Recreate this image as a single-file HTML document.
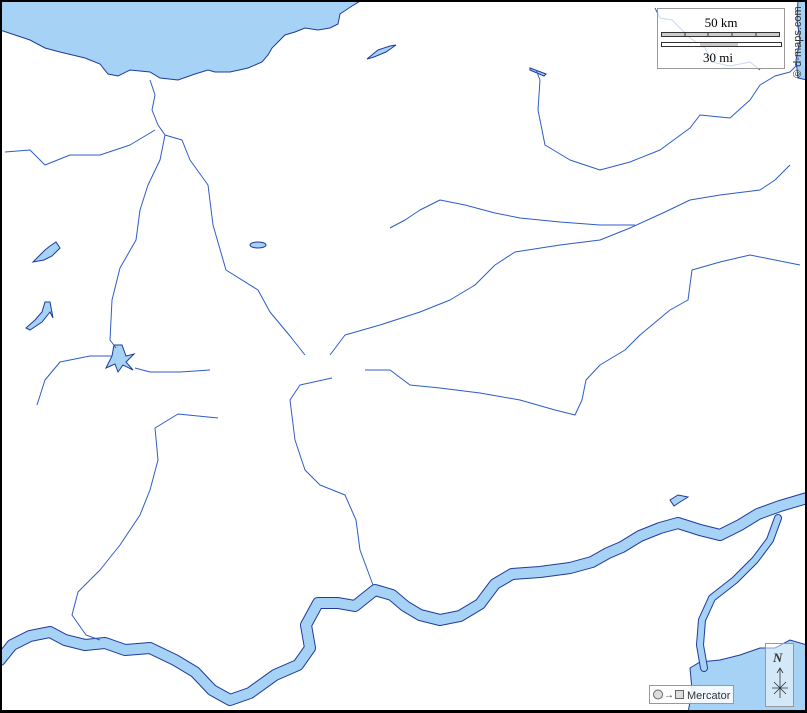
<!DOCTYPE html>
<html><head><meta charset="utf-8"><style>
html,body{margin:0;padding:0;background:#fff}
svg{display:block}
</style></head><body>
<svg width="807" height="713" viewBox="0 0 807 713" xmlns="http://www.w3.org/2000/svg">
<rect width="807" height="713" fill="#fff"/>
<g fill="#a6d3f5" stroke="#1e3a9a" stroke-width="1">
<path d="M0,0 L362,0 L352,6 L340,14 L338,24 L330,28 L318,30 L305,28 L295,32 L285,35 L278,42 L272,48 L268,55 L262,62 L248,68 L230,72 L215,72 L208,70 L195,74 L178,80 L160,78 L150,72 L130,70 L118,76 L108,74 L100,64 L85,58 L60,52 L45,48 L30,40 L15,35 L0,30 Z"/>
<path d="M807,0 L807,80 L798,78 L796,60 L800,40 L797,20 L798,0 Z"/>
<path d="M690,668 L700,662 L720,660 L740,655 L760,648 L775,648 L790,640 L807,645 L807,713 L688,713 L692,690 Z"/>
<ellipse cx="258" cy="245" rx="8" ry="3"/>
<path d="M33,262 L40,255 L45,250 L50,246 L56,242 L60,248 L52,256 L44,260 Z"/>
<path d="M26,328 L35,320 L42,312 L45,302 L50,302 L53,318 L50,312 L42,322 L30,330 Z"/>
<path d="M114,345 L122,345 L126,356 L134,354 L126,362 L133,370 L123,365 L118,372 L115,364 L106,368 L112,356 Z"/>
<path d="M670,500 L678,495 L688,497 L680,502 L674,506 Z"/>
<path d="M378,50 L390,46 L396,45 L386,52 L374,57 L367,59 Z"/>
<path d="M530,68 L546,74 L544,76 L530,70 Z"/>
</g>
<g fill="none" stroke-linecap="round" stroke-linejoin="round">
<path d="M0,660 L12,645 L30,636 L50,632 L65,640 L85,645 L105,643 L125,650 L150,648 L175,660 L195,672 L212,690 L230,700 L250,693 L275,675 L298,665 L310,648 L306,625 L318,603 L338,603 L355,606 L375,590 L392,595 L405,606 L420,615 L440,620 L460,616 L480,604 L495,584 L512,574 L540,572 L570,568 L592,562 L608,553 L622,547 L640,536 L660,528 L678,523 L700,530 L720,535 L740,525 L758,514 L780,506 L807,498" stroke="#1e3a9a" stroke-width="12"/>
<path d="M0,660 L12,645 L30,636 L50,632 L65,640 L85,645 L105,643 L125,650 L150,648 L175,660 L195,672 L212,690 L230,700 L250,693 L275,675 L298,665 L310,648 L306,625 L318,603 L338,603 L355,606 L375,590 L392,595 L405,606 L420,615 L440,620 L460,616 L480,604 L495,584 L512,574 L540,572 L570,568 L592,562 L608,553 L622,547 L640,536 L660,528 L678,523 L700,530 L720,535 L740,525 L758,514 L780,506 L807,498" stroke="#a6d3f5" stroke-width="10"/>
<path d="M778,518 L770,540 L755,560 L735,580 L712,598 L702,620 L700,645 L704,668" stroke="#1e3a9a" stroke-width="8"/>
<path d="M778,518 L770,540 L755,560 L735,580 L712,598 L702,620 L700,645 L704,668" stroke="#a6d3f5" stroke-width="6"/>
</g>
<g fill="none" stroke="#2d5cc8" stroke-width="1" stroke-linejoin="round">
<path d="M150,80 L155,95 L152,110 L158,125 L165,135 L182,140 L190,160 L208,185 L213,225 L226,270 L258,290 L270,312 L290,336 L305,355"/>
<path d="M165,135 L160,160 L148,185 L140,210 L136,240 L120,268 L112,300 L110,340 L116,348"/>
<path d="M5,152 L30,150 L45,165 L70,155 L100,155 L130,145 L155,130"/>
<path d="M112,356 L90,356 L60,362 L45,380 L37,405"/>
<path d="M135,368 L150,372 L180,372 L210,370"/>
<path d="M332,378 L300,385 L290,400 L295,440 L305,470 L320,485 L345,495 L356,520 L360,550 L373,585"/>
<path d="M218,418 L178,414 L155,428 L158,460 L150,490 L140,515 L120,545 L100,570 L78,592 L72,615 L86,635 L100,640"/>
<path d="M330,355 L345,335 L380,325 L420,312 L450,300 L475,285 L495,265 L515,252 L560,245 L600,240 L630,228 L665,212 L690,200 L720,195 L760,190 L775,180 L790,165"/>
<path d="M390,228 L405,220 L420,210 L440,200 L465,205 L495,213 L520,218 L560,222 L600,225 L635,225"/>
<path d="M365,370 L390,370 L410,385 L440,388 L480,393 L520,400 L555,410 L575,415 L582,400 L586,380 L600,365 L625,350 L640,335 L670,310 L688,300 L692,270 L720,262 L750,255 L775,260 L800,265"/>
<path d="M536,70 L540,80 L538,110 L545,145 L570,160 L600,170 L630,162 L660,150 L690,128 L700,115 L730,118 L750,100 L760,85 L775,76 L790,72 L797,65"/>
<path d="M655,8 L660,18 L672,20 L690,38 L705,48 L712,62 L730,66 L750,62 L760,70"/>
</g>
<rect x="657.5" y="8.5" width="127" height="60" fill="#fff" fill-opacity="0.75" stroke="#999"/>
<text x="721" y="27" font-family="Liberation Serif, serif" font-size="13" text-anchor="middle">50 km</text>
<rect x="661.5" y="32.5" width="118" height="4" fill="#ccc" stroke="#333"/>
<path d="M685,32v5M708,32v5M732,32v5M756,32v5" stroke="#333"/>
<rect x="661.5" y="42.5" width="120" height="4" fill="#fff" stroke="#333"/>
<rect x="700" y="43" width="38" height="3" fill="#ccc"/>
<text x="718" y="62" font-family="Liberation Serif, serif" font-size="13" text-anchor="middle">30 mi</text>
<text transform="translate(801,78) rotate(-90)" font-family="Liberation Sans, sans-serif" font-size="11" fill="#333">© d-maps.com</text>
<rect x="649.5" y="685.5" width="84" height="18" fill="#fff" fill-opacity="0.85" stroke="#999"/>
<circle cx="658" cy="694.5" r="4.5" fill="#ddd" stroke="#666"/>
<text x="664" y="698" font-family="Liberation Sans, sans-serif" font-size="10" fill="#333">→</text>
<rect x="675.5" y="690.5" width="8" height="8" fill="#ddd" stroke="#666"/>
<text x="687" y="699" font-family="Liberation Sans, sans-serif" font-size="11" fill="#333">Mercator</text>
<rect x="765.5" y="643.5" width="28" height="63" fill="#fff" fill-opacity="0.5" stroke="#999"/>
<text x="773" y="662" font-family="Liberation Serif, serif" font-style="italic" font-weight="bold" font-size="13" fill="#333">N</text>
<path d="M780,668v30M772,688l16,0M774,682l12,12M786,682l-12,12M777,673l3,-5l3,5" stroke="#333" fill="none" stroke-width="0.8"/>
<rect x="1" y="1" width="805" height="710" fill="none" stroke="#000" stroke-width="2"/>
<rect x="0" y="710" width="807" height="3" fill="#000"/>
</svg>
</body></html>
